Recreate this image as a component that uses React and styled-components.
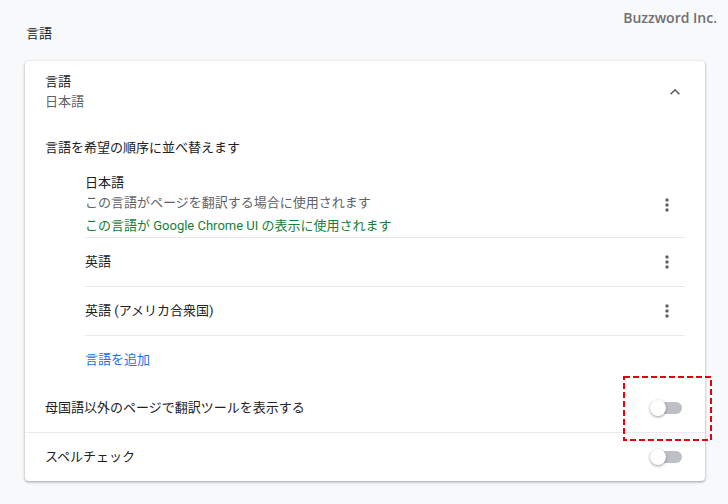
import React from "react";
import styled, { createGlobalStyle } from "styled-components";

const Global = createGlobalStyle`
  html, body { margin: 0; padding: 0; background: #f8f9fa; }
  body {
    font-family: Roboto, "Noto Sans CJK JP", sans-serif;
    font-size: 13px;
    color: #202124;
    -webkit-font-smoothing: antialiased;
  }
`;

const Page = styled.div`
  position: relative;
  width: 728px;
  height: 504px;
  box-sizing: border-box;
  padding: 0 23px 0 25px;
  overflow: hidden;
`;

const Watermark = styled.div`
  position: absolute;
  top: 8px;
  right: 11px;
  font-family: "Open Sans", sans-serif;
  font-weight: 600;
  font-size: 14px;
  line-height: 20px;
  color: #707070;
`;

const PageTitle = styled.h1`
  margin: 24px 0 17px 1px;
  font-size: 13px;
  font-weight: 400;
  line-height: 20px;
  color: #202124;
`;

const Card = styled.div`
  background: #fff;
  border-radius: 4px;
  box-shadow: 0 1px 2px 0 rgba(60, 64, 67, 0.3), 0 1px 3px 1px rgba(60, 64, 67, 0.15);
`;

const HeaderRow = styled.div`
  display: flex;
  align-items: center;
  padding: 11px 20px 13px;
`;

const TextCol = styled.div`
  flex: 1;
  display: flex;
  flex-direction: column;
`;

const Line = styled.div`
  line-height: 20px;
  color: ${(p) => p.$color || "#202124"};
  margin-top: ${(p) => p.$mt || 0}px;
`;

const IconBtn = styled.div`
  width: 36px;
  height: 36px;
  display: flex;
  align-items: center;
  justify-content: center;
  color: #5f6368;
  margin-right: ${(p) => p.$mr || 0}px;
`;

const SubTitle = styled.div`
  padding: 13px 20px 0;
  line-height: 20px;
`;

const List = styled.div`
  margin: 15px 20px 0 60px;
`;

const Item = styled.div`
  display: flex;
  align-items: center;
  border-bottom: 1px solid #e8eaed;
  min-height: ${(p) => (p.$multi ? "auto" : "48px")};
  padding-bottom: ${(p) => (p.$multi ? 1 : 0)}px;
`;

const AddLink = styled.div`
  height: 48px;
  display: flex;
  align-items: center;
  color: #1a73e8;
  line-height: 20px;
`;

const ToggleRow = styled.div`
  display: flex;
  align-items: center;
  height: 48px;
  padding: 0 21px 0 20px;
  border-top: ${(p) => (p.$divider ? "1px solid #e8eaed" : "none")};
`;

const Label = styled.div`
  flex: 1;
  line-height: 20px;
`;

const Toggle = styled.div`
  position: relative;
  width: 34px;
  height: 16px;
`;

const Track = styled.div`
  position: absolute;
  left: 3px;
  top: 2px;
  width: 29px;
  height: 12px;
  border-radius: 6px;
  background: #bdc1c6;
`;

const Knob = styled.div`
  position: absolute;
  left: 0;
  top: 0;
  width: 16px;
  height: 16px;
  border-radius: 50%;
  background: #fff;
  box-shadow: 0 1px 3px 0 rgba(0, 0, 0, 0.4);
`;

const Highlight = styled.svg`
  position: absolute;
  left: 623px;
  top: 376px;
  width: 89px;
  height: 65px;
  overflow: visible;
`;

const ChevronUp = () => (
  <svg width="20" height="20" viewBox="0 0 24 24" fill="currentColor">
    <path d="M12 8l-6 6 1.41 1.41L12 10.83l4.59 4.58L18 14z" />
  </svg>
);

const MoreVert = () => (
  <svg width="20" height="20" viewBox="0 0 24 24" fill="currentColor">
    <path d="M12 8c1.1 0 2-.9 2-2s-.9-2-2-2-2 .9-2 2 .9 2 2 2zm0 2c-1.1 0-2 .9-2 2s.9 2 2 2 2-.9 2-2-.9-2-2-2zm0 6c-1.1 0-2 .9-2 2s.9 2 2 2 2-.9 2-2-.9-2-2-2z" />
  </svg>
);

const Switch = () => (
  <Toggle>
    <Track />
    <Knob />
  </Toggle>
);

const languages = [
  {
    name: "日本語",
    lines: [
      { text: "この言語がページを翻訳する場合に使用されます", color: "#5f6368", mt: 0 },
      { text: "この言語が Google Chrome UI の表示に使用されます", color: "#188038", mt: 3 },
    ],
  },
  { name: "英語", lines: [] },
  { name: "英語 (アメリカ合衆国)", lines: [] },
];

export default function App() {
  return (
    <>
      <Global />
      <Page>
        <Watermark>Buzzword Inc.</Watermark>
        <PageTitle>言語</PageTitle>
        <Card>
          <HeaderRow>
            <TextCol>
              <Line>言語</Line>
              <Line $color="#5f6368">日本語</Line>
            </TextCol>
            <IconBtn $mr={-8}>
              <ChevronUp />
            </IconBtn>
          </HeaderRow>
          <SubTitle>言語を希望の順序に並べ替えます</SubTitle>
          <List>
            {languages.map((l) => (
              <Item key={l.name} $multi={l.lines.length > 0}>
                <TextCol>
                  <Line>{l.name}</Line>
                  {l.lines.map((ln) => (
                    <Line key={ln.text} $color={ln.color} $mt={ln.mt}>
                      {ln.text}
                    </Line>
                  ))}
                </TextCol>
                <IconBtn>
                  <MoreVert />
                </IconBtn>
              </Item>
            ))}
            <AddLink>言語を追加</AddLink>
          </List>
          <ToggleRow>
            <Label>母国語以外のページで翻訳ツールを表示する</Label>
            <Switch />
          </ToggleRow>
          <ToggleRow $divider>
            <Label>スペルチェック</Label>
            <Switch />
          </ToggleRow>
        </Card>
        <Highlight viewBox="0 0 89 65">
          <rect x="1" y="1" width="87" height="63" fill="none" stroke="#e60012" strokeWidth="2" strokeDasharray="6 3" />
        </Highlight>
      </Page>
    </>
  );
}
